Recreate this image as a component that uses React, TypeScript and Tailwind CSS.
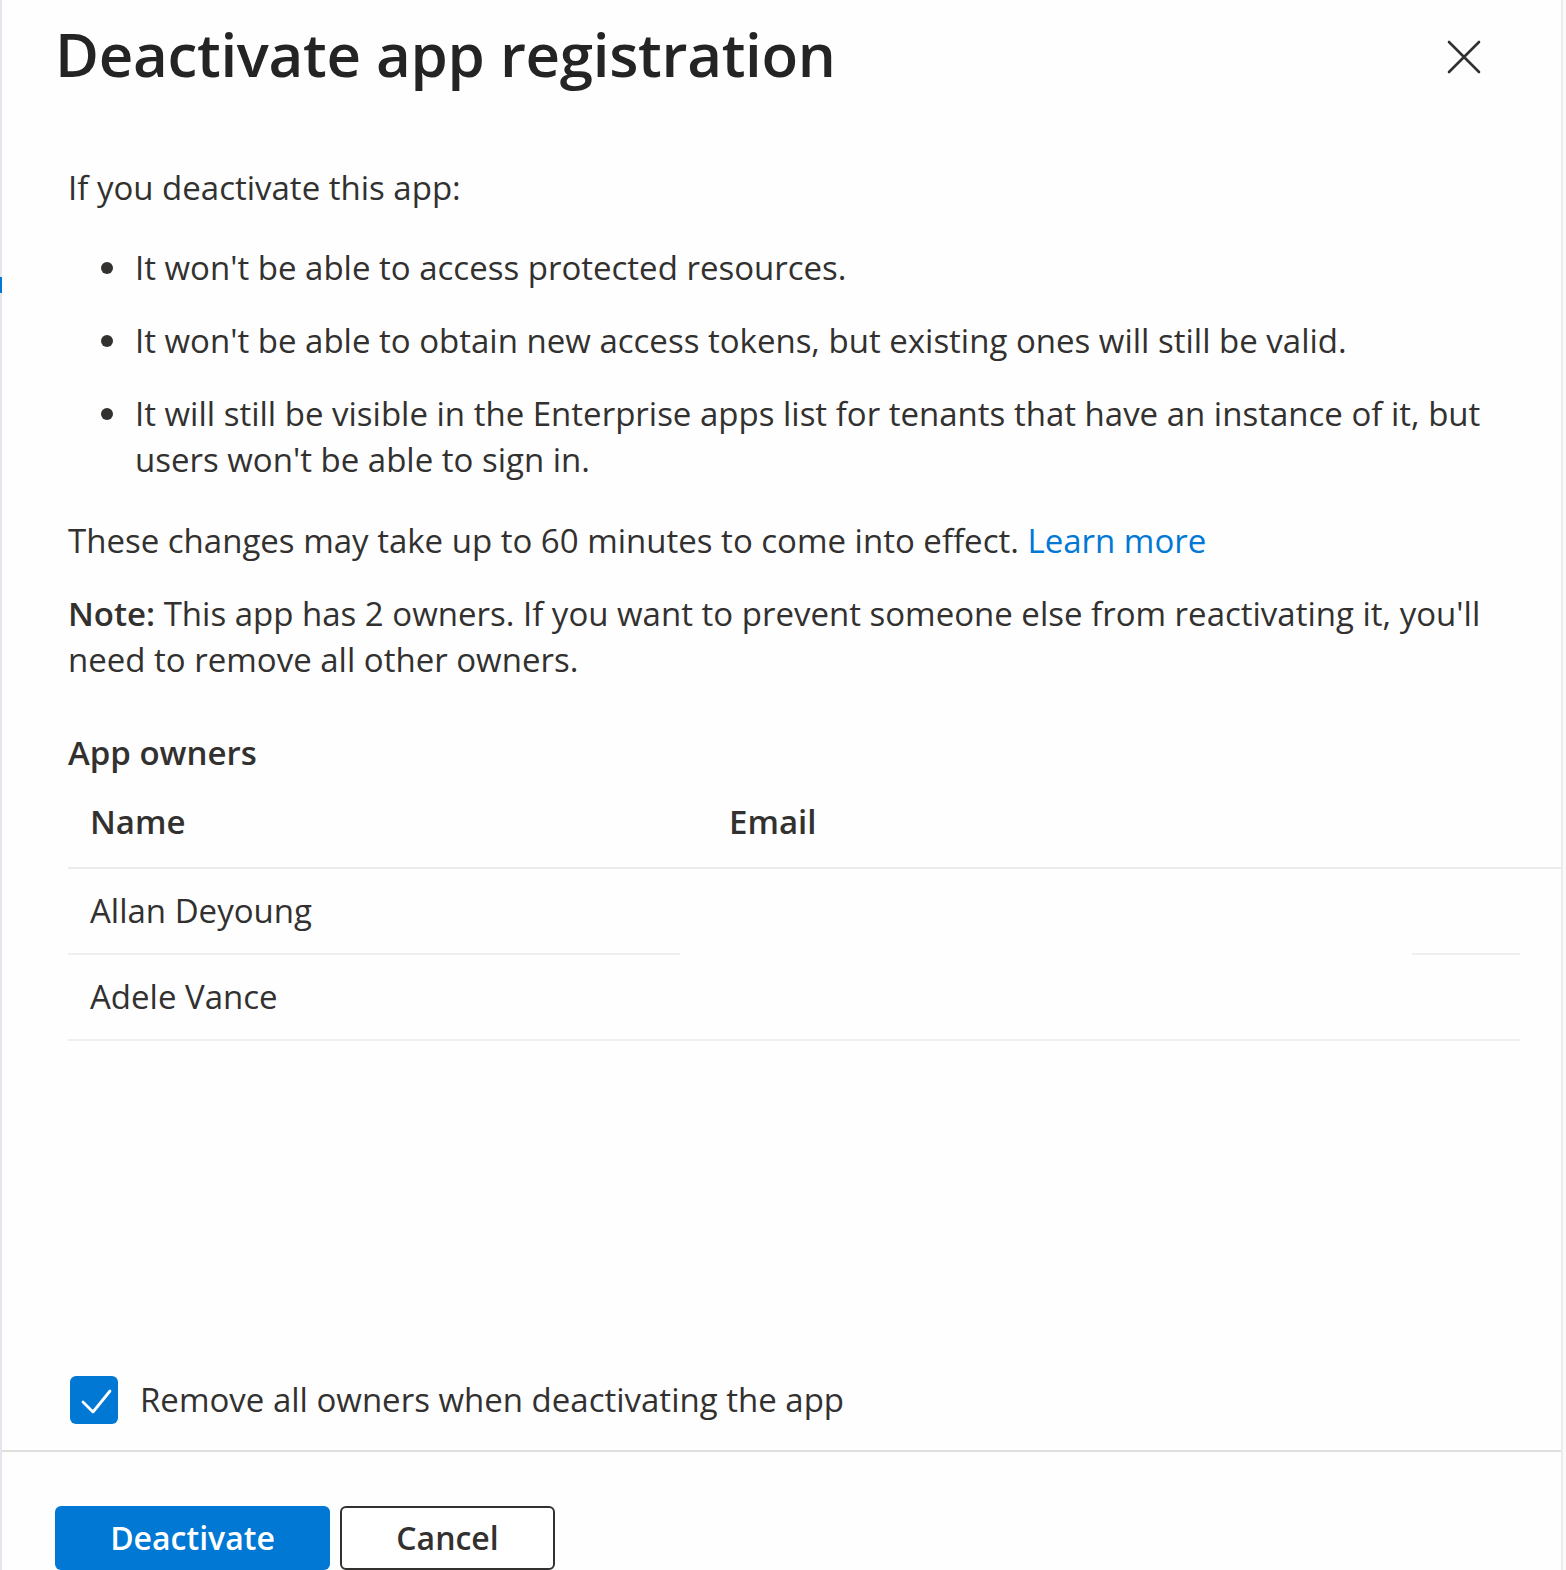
import React from "react";

const owners = [
  { name: "Allan Deyoung", email: "" },
  { name: "Adele Vance", email: "" },
];

const bullets = [
  "It won't be able to access protected resources.",
  "It won't be able to obtain new access tokens, but existing ones will still be valid.",
  "It will still be visible in the Enterprise apps list for tenants that have an instance of it, but users won't be able to sign in.",
];

function Bullet({ children, className }: { children: React.ReactNode; className?: string }) {
  return (
    <div className={"flex " + (className || "")}>
      <div className="w-[67px] shrink-0 flex justify-end pr-[22px] pt-[17px]">
        <span className="block w-[12px] h-[12px] rounded-full bg-[#323130]" />
      </div>
      <p className="flex-1">{children}</p>
    </div>
  );
}

export default function App() {
  return (
    <div className="w-[1566px] h-[1570px] overflow-hidden flex bg-white text-[#323130] font-['Open_Sans',sans-serif]">
      {/* sliver of the page behind the panel */}
      <div className="w-[2px] shrink-0 bg-[#e3e6ec]">
        <div className="mt-[277px] h-[16px] bg-[#0078d4]" />
      </div>

      <div className="w-[1559px] shrink-0 flex flex-col bg-[#fefefe]">
        {/* Header */}
        <div className="flex items-start justify-between pl-[53px] pr-[80px] pt-[18px]">
          <h1 className="text-[60px] leading-[72px] font-semibold tracking-[-0.3px] text-[#242424]">
            Deactivate app registration
          </h1>
          <button className="mt-[22px] w-[34px] h-[34px] flex items-center justify-center">
            <svg viewBox="0 0 34 34" className="w-[34px] h-[34px]" fill="none" stroke="#323130" strokeWidth="2.6" strokeLinecap="round">
              <path d="M2 2 L32 32 M32 2 L2 32" />
            </svg>
          </button>
        </div>

        {/* Body */}
        <div className="pl-[66px] text-[33px] leading-[46px]">
          <p className="mt-[75px] pr-[56px]">If you deactivate this app:</p>
          <div className="pr-[56px]">
            <Bullet className="mt-[34px]">{bullets[0]}</Bullet>
            <Bullet className="mt-[27px]">{bullets[1]}</Bullet>
            <Bullet className="mt-[27px]">{bullets[2]}</Bullet>
          </div>
          <p className="mt-[35px] pr-[56px]">
            These changes may take up to 60 minutes to come into effect.{" "}
            <a className="text-[#0078d4]">Learn more</a>
          </p>
          <p className="mt-[27px] pr-[56px]">
            <b className="font-semibold">Note:</b> This app has 2 owners. If you want to prevent someone else from
            reactivating it, you'll need to remove all other owners.
          </p>

          <h2 className="mt-[47px] font-semibold">App owners</h2>

          {/* Owners table */}
          <div>
            <div className="h-[93px] flex items-center border-b-2 border-[#edebe9] font-semibold">
              <div className="w-[661px] pl-[22px]">Name</div>
              <div className="flex-1">Email</div>
            </div>
            {owners.map((o, i) => (
              <div key={o.name} className="mr-[41px]">
                <div className="h-[84px] flex items-center">
                  <div className="w-[661px] pl-[22px]">{o.name}</div>
                  <div className="flex-1">{o.email}</div>
                </div>
                {i === 0 ? (
                  <div className="h-[2px] flex justify-between">
                    <div className="w-[612px] bg-[#f0efee]" />
                    <div className="w-[108px] bg-[#f0efee]" />
                  </div>
                ) : (
                  <div className="h-[2px] bg-[#f0efee]" />
                )}
              </div>
            ))}
          </div>
        </div>

        <div className="flex-1" />

        {/* Checkbox */}
        <label className="flex items-center pl-[68px] h-[48px] text-[33px] leading-[46px]">
          <span className="w-[48px] h-[48px] rounded-[6px] bg-[#0078d4] flex items-center justify-center">
            <svg viewBox="0 0 24 24" className="w-[48px] h-[48px]" fill="none" stroke="white" strokeWidth="1.4" strokeLinecap="round" strokeLinejoin="round">
              <path d="M6.5 13 L11.5 18 L20 7.5" />
            </svg>
          </span>
          <span className="ml-[22px]">Remove all owners when deactivating the app</span>
        </label>

        <div className="mt-[26px] h-[2px] bg-[#e1dfdd]" />

        {/* Footer */}
        <div className="mt-[54px] pl-[53px] flex items-start gap-[10px]">
          <button className="w-[275px] h-[64px] rounded-[6px] bg-[#0078d4] text-white text-[32px] leading-[40px] font-semibold">
            Deactivate
          </button>
          <button className="w-[215px] h-[64px] rounded-[6px] border-2 border-[#323130] bg-white text-[32px] leading-[40px] font-semibold">
            Cancel
          </button>
        </div>
      </div>

      <div className="w-[2px] shrink-0 bg-[#ebebeb]" />
      <div className="flex-1 bg-[#fafafa]" />
    </div>
  );
}
